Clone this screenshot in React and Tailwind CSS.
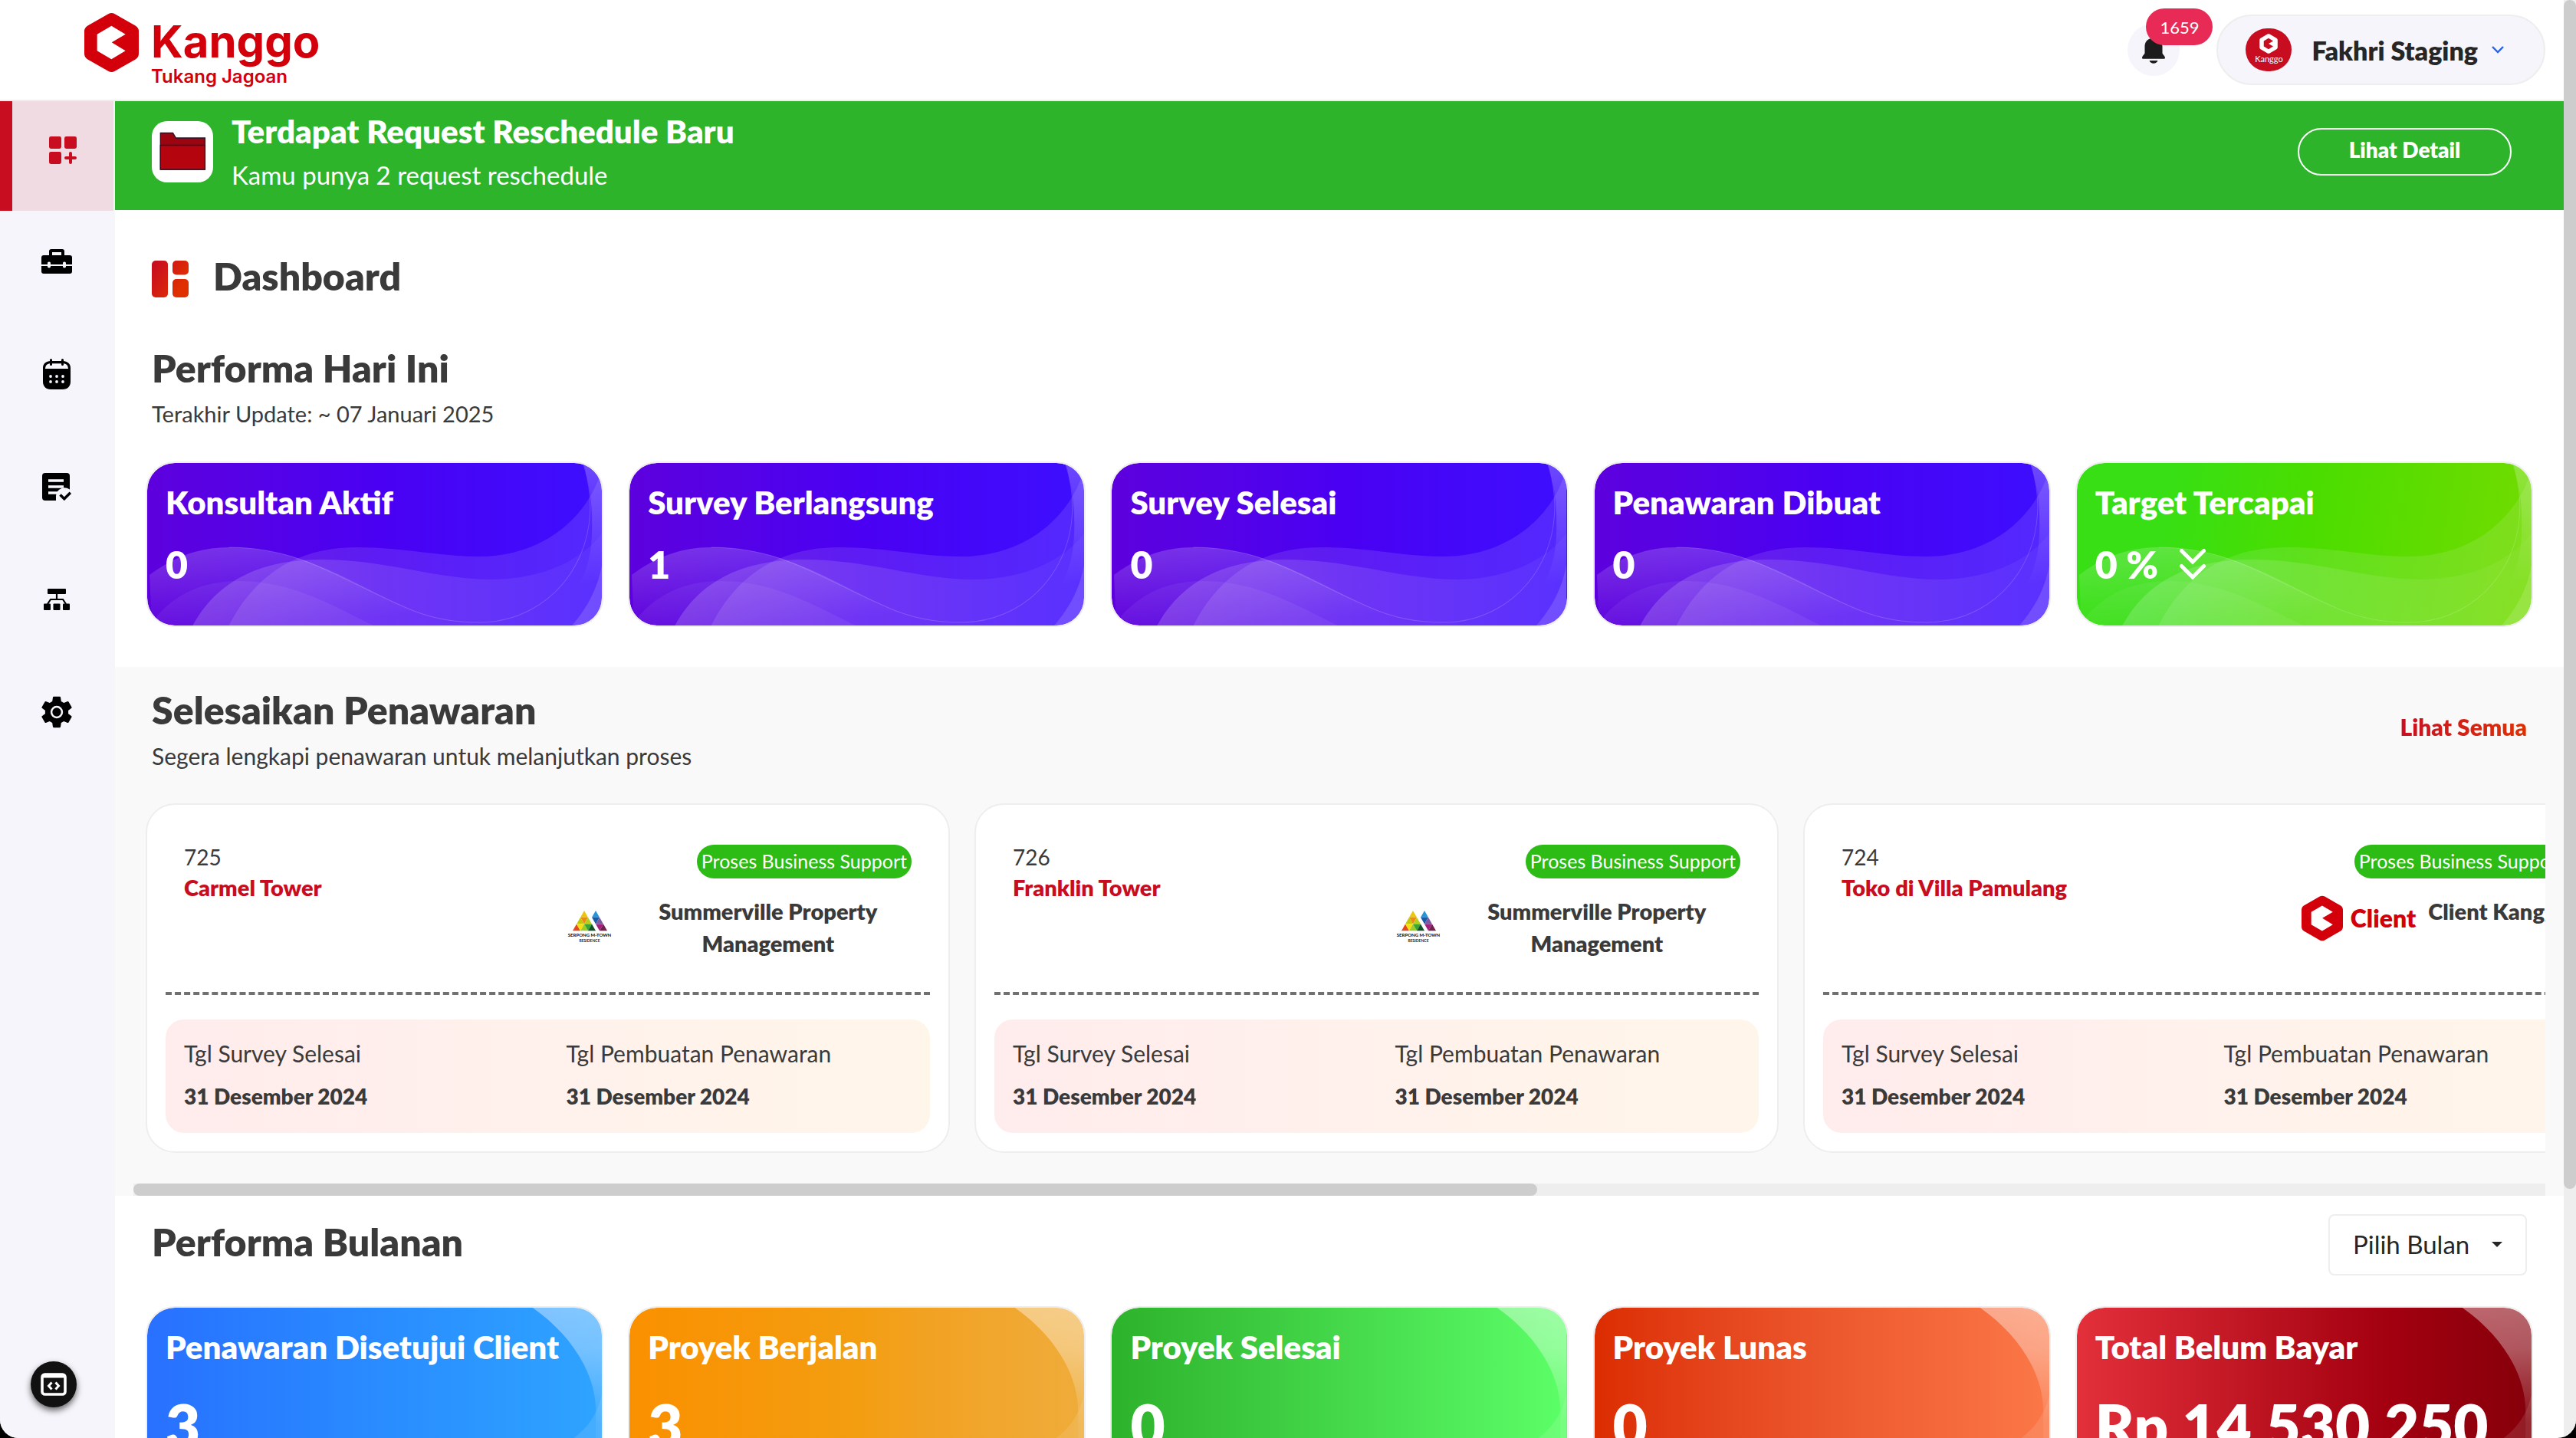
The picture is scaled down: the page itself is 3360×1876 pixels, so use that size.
import React from 'react';

function HexMark({ className, ring = '#d3000b', core = '#ffffff' }) {
  return (
    <svg viewBox="0 0 213 235" className={className} aria-hidden="true">
      <polygon
        points="106.5,28 187,74 187,161 106.5,207 26,161 26,74"
        fill={ring}
        stroke={ring}
        strokeWidth="52"
        strokeLinejoin="round"
      />
      <polygon points="106,52 161,85 107,117 161,150 106,183 50,150 50,85" fill={core} />
    </svg>
  );
}

function GridPlusIcon() {
  return (
    <svg viewBox="0 0 36 36" className="size-9" fill="#c80d20" aria-hidden="true">
      <rect width="16" height="16" rx="2.4" />
      <rect x="20" width="16" height="16" rx="2.4" />
      <rect y="20" width="16" height="16" rx="2.4" />
      <path d="M28 22v12M22 28h12" stroke="#c80d20" strokeWidth="4" strokeLinecap="round" />
    </svg>
  );
}

function ToolboxIcon() {
  return (
    <svg viewBox="0 0 40 32" className="h-8 w-10" aria-hidden="true">
      <path
        fillRule="evenodd"
        d="M13 0h14a3 3 0 0 1 3 3v5h7a3 3 0 0 1 3 3v9H0v-9a3 3 0 0 1 3-3h7V3a3 3 0 0 1 3-3zm1 4v4h12V4z"
      />
      <path d="M0 22h40v7a3 3 0 0 1-3 3H3a3 3 0 0 1-3-3z" />
      <rect x="8" y="16.5" width="4" height="8" rx="1.8" fill="#f5f5fb" />
      <rect x="28" y="16.5" width="4" height="8" rx="1.8" fill="#f5f5fb" />
    </svg>
  );
}

function CalendarIcon() {
  return (
    <svg viewBox="0 0 36 40" className="h-10 w-9" aria-hidden="true">
      <path
        fillRule="evenodd"
        d="M10 3h16c6 0 10 3.500 10 9v18c0 6-4 10-10 10H10C4 40 0 36 0 30V12c0-5.500 4-9 10-9zM3 13h30c-.3-4.700-2.500-6.800-7-6.800H10c-4.500 0-6.700 2.100-7 6.800z"
      />
      <path d="M10.500 1.500v6M25.500 1.500v6" stroke="#000" strokeWidth="3" strokeLinecap="round" />
      <g fill="#f5f5fb">
        <circle cx="10" cy="23" r="1.900" />
        <circle cx="18" cy="23" r="1.900" />
        <circle cx="26" cy="23" r="1.900" />
        <circle cx="10" cy="30" r="1.900" />
        <circle cx="18" cy="30" r="1.900" />
        <circle cx="26" cy="30" r="1.900" />
      </g>
    </svg>
  );
}

function ListCheckIcon() {
  return (
    <svg viewBox="0 0 38 36" className="h-9 w-[38px]" aria-hidden="true">
      <rect width="36" height="36" rx="4" />
      <path d="M8 10h20M8 18h20M8 26h13" stroke="#f5f5fb" strokeWidth="3.400" />
      <path d="M18 38V31a11 11 0 0 1 20-7v14z" fill="#f5f5fb" />
      <path d="M23.500 28.500l5.300 5.300 8-8" fill="none" stroke="#000" strokeWidth="3.400" />
    </svg>
  );
}

function SitemapIcon() {
  return (
    <svg viewBox="0 0 34 28" className="h-7 w-[34px]" aria-hidden="true">
      <rect x="5" width="24" height="7" rx="1" />
      <path d="M17 6v8M5 20l4-6h16l4 6" fill="none" stroke="#000" strokeWidth="2.200" />
      <rect y="19.500" width="9" height="8.500" rx="1" />
      <rect x="12.500" y="19.500" width="9" height="8.500" rx="1" />
      <rect x="25" y="19.500" width="9" height="8.500" rx="1" />
    </svg>
  );
}

function GearIcon() {
  return (
    <svg viewBox="2 2 20 20" className="size-[42px]" aria-hidden="true">
      <path d="M19.140 12.940c.04-.3.060-.610.060-.940 0-.320-.020-.640-.070-.940l2.030-1.580a.49.49 0 0 0 .120-.610l-1.920-3.320a.488.488 0 0 0-.590-.220l-2.390.960c-.5-.380-1.030-.7-1.620-.940l-.360-2.540a.484.484 0 0 0-.480-.410h-3.840c-.240 0-.430.170-.470.410l-.360 2.540c-.590.240-1.130.570-1.620.940l-2.390-.960c-.220-.080-.470 0-.590.220L2.740 8.870c-.120.210-.080.470.120.610l2.030 1.580c-.050.3-.090.630-.090.940s.020.640.070.940l-2.030 1.580a.49.49 0 0 0-.120.610l1.920 3.320c.120.220.370.290.590.220l2.390-.960c.5.380 1.030.7 1.620.940l.360 2.540c.050.240.240.410.480.410h3.840c.240 0 .440-.170.470-.410l.360-2.540c.590-.240 1.130-.560 1.620-.940l2.390.960c.220.080.470 0 .590-.220l1.920-3.320c.120-.220.070-.470-.120-.610z" />
      <circle cx="12" cy="12" r="3.300" fill="none" stroke="#f5f5fb" strokeWidth="1.200" />
    </svg>
  );
}

function BellIcon() {
  return (
    <svg viewBox="0 0 30 36" className="h-9 w-[30px]" fill="#1c1c1c" aria-hidden="true">
      <path d="M15 0a3 3 0 0 1 3 3c5 1 8.500 5 8.500 10.500V22c0 2 3.500 4 3.500 6.300 0 1-.7 1.500-1.700 1.500H1.700c-1 0-1.700-.5-1.700-1.500C0 26 3.500 24 3.500 22v-8.500C3.500 8 7 4 12 3a3 3 0 0 1 3-3z" />
      <path d="M9.500 32h11c-1 2.500-3 3.800-5.500 3.800S10.500 34.500 9.500 32z" />
    </svg>
  );
}

function FolderIcon() {
  return (
    <svg viewBox="0 0 80 80" className="size-20" aria-hidden="true">
      <path d="M11.300 63.200V15.500h16.200l4 6.500h37.900v41.200z" fill="#9c0510" stroke="#1f1630" strokeWidth="1.300" />
      <path d="M11.300 31.500h58.100v31.700H11.300z" fill="#b4050e" stroke="#1f1630" strokeWidth="1.300" />
    </svg>
  );
}

function DashboardIcon() {
  return (
    <svg viewBox="0 0 48 48" className="mb-0.5 size-12" fill="url(#dash-red)" aria-hidden="true">
      <defs>
        <linearGradient id="dash-red" gradientUnits="userSpaceOnUse" x1="0" y1="12" x2="38" y2="36">
          <stop offset="0" stopColor="#c80d20" />
          <stop offset="1" stopColor="#e03000" />
        </linearGradient>
      </defs>
      <rect width="21" height="48" rx="5" />
      <rect x="27" width="21" height="18.500" rx="5" />
      <rect x="27" y="24" width="21" height="24" rx="5" />
    </svg>
  );
}

function MTownLogo() {
  return (
    <svg viewBox="0 0 60 80" className="h-20 w-[60px] shrink-0" role="img" aria-label="Serpong M-Town Residence">
      <path d="M23 20l5 8.700H18z" fill="#ecc60e" />
      <path d="M18 28.700h10l-5 8.700z" fill="#f08a12" />
      <path d="M18 28.700l5 8.700H13z" fill="#c2c80f" />
      <path d="M28 28.700l5 8.700H23z" fill="#b4cf20" />
      <path d="M13 37.400l5 8.800H8z" fill="#e2491c" />
      <path d="M13 37.400h10l-5 8.800z" fill="#f6e012" />
      <path d="M23 37.400l5 8.800H18z" fill="#9ccc28" />
      <path d="M23 37.400h10l-5 8.800z" fill="#3aa535" />
      <path d="M33 37.400l5 8.800H28z" fill="#10512a" />
      <path d="M38 20l5 8.700H33z" fill="#2696d8" />
      <path d="M33 28.700h10l-5 8.700z" fill="#1c5aa8" />
      <path d="M43 28.700l5 8.700H38z" fill="#7a5aa0" />
      <path d="M38 37.400h10l-5 8.800z" fill="#a0207c" />
      <path d="M48 37.400l5 8.800H43z" fill="#74204e" />
      <text x="30" y="54" textAnchor="middle" fontFamily="Lato, sans-serif" fontWeight="900" fontSize="6" fill="#222">
        SERPONG M-TOWN
      </text>
      <text x="30" y="61" textAnchor="middle" fontFamily="Lato, sans-serif" fontWeight="700" fontSize="5" fill="#222">
        RESIDENCE
      </text>
    </svg>
  );
}

function ClientLogo() {
  return (
    <div className="flex h-[60px] shrink-0 items-center gap-2.5 text-[32px] font-extrabold text-[#d3000b]">
      <HexMark className="h-[60px] w-[54px]" />
      Client
    </div>
  );
}

function Waves() {
  return (
    <svg viewBox="0 0 590 212" preserveAspectRatio="none" className="absolute inset-0 size-full" aria-hidden="true">
      <defs>
        <linearGradient id="wave-hump" x1="0" y1="0" x2="0.250" y2="1">
          <stop offset="0" stopColor="#fff" stopOpacity="0.200" />
          <stop offset="1" stopColor="#fff" stopOpacity="0" />
        </linearGradient>
        <linearGradient id="wave-low" x1="0" y1="0" x2="1" y2="0">
          <stop offset="0" stopColor="#fff" stopOpacity="0.170" />
          <stop offset="1" stopColor="#fff" stopOpacity="0.040" />
        </linearGradient>
        <linearGradient id="wave-edge" x1="0" y1="0" x2="0" y2="1">
          <stop offset="0" stopColor="#fff" stopOpacity="0.250" />
          <stop offset="1" stopColor="#fff" stopOpacity="0" />
        </linearGradient>
      </defs>
      <path d="M106 212C140 145 195 110 272 110C335 110 375 122 430 122C515 122 570 70 588 14L590 0V212z" fill="#fff" fillOpacity="0.110" />
      <path d="M59 212C90 155 145 126 226 126C310 126 375 152 446 152C515 152 565 125 590 92V212z" fill="url(#wave-low)" />
      <path d="M3 146C35 122 68 110 106 110C200 110 265 156 334 188C362 201 395 208 430 208L300 212H6z" fill="url(#wave-hump)" />
      <path
        d="M106 110C200 110 250 152 334 188C362 201 395 208 430 208C530 208 600 110 566 2"
        fill="none"
        stroke="#fff"
        strokeOpacity="0.170"
      />
      <path d="M12 200C40 168 75 154 120 154C185 154 240 185 293 212H12z" fill="#fff" fillOpacity="0.060" />
      <path d="M566 0C574 28 578 55 577 90C576 130 565 150 560 160L590 150V0z" fill="url(#wave-edge)" />
      <path d="M551 212C570 190 584 165 590 133V212z" fill="#fff" fillOpacity="0.140" />
    </svg>
  );
}

function Crescent() {
  return (
    <svg viewBox="0 0 590 212" className="absolute inset-x-0 top-0 h-auto w-full overflow-visible" aria-hidden="true">
      <defs>
        <linearGradient id="crescent" gradientUnits="userSpaceOnUse" x1="0" y1="0" x2="0" y2="150">
          <stop offset="0" stopColor="#fff" stopOpacity="0.400" />
          <stop offset="0.350" stopColor="#fff" stopOpacity="0.340" />
          <stop offset="1" stopColor="#fff" stopOpacity="0.060" />
        </linearGradient>
      </defs>
      <path d="M500 0C550 35 582 85 582 134V300H590V0z" fill="url(#crescent)" />
      <path d="M590 112C584 138 572 156 551 171L525 185V300H590z" fill="#fff" fillOpacity="0.110" />
    </svg>
  );
}

const cardBase =
  'relative overflow-hidden rounded-[38px] border-2 border-[#eeeeee] bg-clip-padding px-6 pt-[26px] text-white';
const purple = 'bg-linear-to-r from-[#5d00dd] via-[#4a00f2] to-[#3d0eff]';

const today = [
  { title: 'Konsultan Aktif', value: '0', tone: purple },
  { title: 'Survey Berlangsung', value: '1', tone: purple },
  { title: 'Survey Selesai', value: '0', tone: purple },
  { title: 'Penawaran Dibuat', value: '0', tone: purple },
  {
    title: 'Target Tercapai',
    value: '0 %',
    tone: 'bg-[linear-gradient(100deg,#37df14_20%,#4bdd00_50%,#74db00)]',
    down: true,
  },
];

const monthly = [
  { title: 'Penawaran Disetujui Client', value: '3', tone: 'bg-linear-to-r from-[#2970ff] to-[#2fa4ff]' },
  { title: 'Proyek Berjalan', value: '3', tone: 'bg-linear-to-r from-[#fa9000] via-[#f39d10] to-[#efac3a]' },
  { title: 'Proyek Selesai', value: '0', tone: 'bg-linear-to-r from-[#2db22b] to-[#5cff68]' },
  { title: 'Proyek Lunas', value: '0', tone: 'bg-linear-to-r from-[#dc2c00] to-[#fb7848]' },
  {
    title: 'Total Belum Bayar',
    value: 'Rp 14.530.250',
    tone: 'bg-[linear-gradient(90deg,#e3303a,#a30010_68%,#85000a)]',
  },
];

const offers = [
  { id: '725', name: 'Carmel Tower', client: 'Summerville Property Management', Logo: MTownLogo },
  { id: '726', name: 'Franklin Tower', client: 'Summerville Property Management', Logo: MTownLogo },
  { id: '724', name: 'Toko di Villa Pamulang', client: 'Client Kanggo', Logo: ClientLogo },
];

const nav = [
  { label: 'Proyek', Icon: ToolboxIcon },
  { label: 'Kalender', Icon: CalendarIcon },
  { label: 'Penawaran', Icon: ListCheckIcon },
  { label: 'Struktur', Icon: SitemapIcon },
  { label: 'Pengaturan', Icon: GearIcon },
];

function OfferCard({ id, name, client, Logo }) {
  return (
    <article className="w-[1049px] shrink-0 rounded-[38px] border-2 border-[#eeeeee] bg-white px-6 pb-6">
      <div className="grid grid-cols-2 pt-12">
        <div className="px-6 leading-10">
          <p className="text-[28px]">{id}</p>
          <h3 className="text-[29px] font-extrabold text-[#c80d20]">{name}</h3>
        </div>
        <div className="flex flex-col items-end px-6 pt-1">
          <span className="flex h-11 items-center rounded-full bg-[#2dbb15] px-1.5 text-[25px] whitespace-nowrap text-white">
            Proses Business Support
          </span>
          <div className="mt-[22px] flex min-h-21 items-start justify-end gap-4">
            <Logo />
            <p className="text-center text-[29px] leading-[42px] font-extrabold">{client}</p>
          </div>
        </div>
      </div>
      <div className="mt-[42px] border-t-4 border-dashed border-[#707070]" />
      <dl className="mt-8 grid grid-cols-2 rounded-3xl bg-linear-to-r from-[#ffeced] to-[#fff6ea] pt-6 pb-7 leading-10">
        <div className="px-6">
          <dt className="text-[30px]">Tgl Survey Selesai</dt>
          <dd className="mt-4 text-[28px] font-extrabold">31 Desember 2024</dd>
        </div>
        <div className="px-6">
          <dt className="text-[30px]">Tgl Pembuatan Penawaran</dt>
          <dd className="mt-4 text-[28px] font-extrabold">31 Desember 2024</dd>
        </div>
      </dl>
    </article>
  );
}

function Header() {
  return (
    <header className="flex shrink-0 items-center justify-between border-b-2 border-[#eeeeee] bg-white pr-6 pl-[110px]">
      <a href="#" className="flex h-[130px] items-start gap-4 pt-4 font-[Inter,sans-serif] text-[#d3000b]">
        <HexMark className="h-[79px] w-[71px]" />
        <span className="flex flex-col pt-1.5">
          <span className="text-[58px] leading-[64px] font-bold">Kanggo</span>
          <span className="text-2xl leading-7 font-semibold">Tukang Jagoan</span>
        </span>
      </a>
      <div className="flex items-center gap-12">
        <button type="button" aria-label="Notifikasi" className="relative flex size-[68px] items-center justify-center rounded-full bg-[#f5f5fb]">
          <BellIcon />
          <span className="absolute -top-5 left-6 flex h-12 items-center rounded-full bg-[#e72b56] px-[18px] text-[22px] text-white">
            1659
          </span>
        </button>
        <button type="button" className="flex h-[92px] items-center rounded-full border-2 border-[#eeeeee] bg-[#f5f5fb] pr-[52px] pl-9">
          <span className="flex h-14 w-[60px] flex-col items-center rounded-[28px] bg-[#c80d20] pt-[7px] text-white">
            <HexMark className="h-[26px] w-6" ring="#ffffff" core="#c80d20" />
            <span className="text-[11px] leading-[14px]">Kanggo</span>
          </span>
          <span className="ml-[26px] text-[34px] font-extrabold text-[#262626]">Fakhri Staging</span>
          <svg viewBox="0 0 16 10" className="ml-[18px] h-2.5 w-4" fill="none" stroke="#2563eb" strokeWidth="2.400" aria-hidden="true">
            <path d="M1 1l7 7 7-7" />
          </svg>
        </button>
      </div>
    </header>
  );
}

function Sidebar() {
  return (
    <nav className="w-[150px] shrink-0 border-r-2 border-[#f6f6f9] bg-[#f5f5fb]">
      <a href="#" aria-label="Dashboard" className="flex h-[143px] items-center justify-center border-l-16 border-[#c80d20] bg-[#f0dbe3] pb-[15px]">
        <GridPlusIcon />
      </a>
      {nav.map(({ label, Icon }) => (
        <a key={label} href="#" aria-label={label} className="flex h-[147px] items-center justify-center pb-[15px]">
          <Icon />
        </a>
      ))}
    </nav>
  );
}

export default function App() {
  return (
    <div className="h-screen bg-black font-[Lato,sans-serif] text-[#3a3a3a]">
      <div className="relative flex h-full overflow-hidden rounded-b-3xl bg-white">
        <div className="flex min-w-0 flex-1 flex-col">
          <Header />
          <div className="flex min-h-0 flex-1">
            <Sidebar />
            <main className="min-w-0 flex-1 overflow-hidden">
              <section className="flex h-[142px] items-center gap-6 bg-[#2db42a] pr-[68px] pb-2.5 pl-12 text-white">
                <span className="rounded-[20px] bg-white">
                  <FolderIcon />
                </span>
                <div className="flex-1">
                  <h2 className="text-[42px] leading-[60px] font-extrabold">Terdapat Request Reschedule Baru</h2>
                  <p className="text-[33px] leading-[54px]">Kamu punya 2 request reschedule</p>
                </div>
                <button type="button" className="h-[62px] w-[279px] rounded-full border-2 border-white pb-1.5 text-[28px] font-extrabold">
                  Lihat Detail
                </button>
              </section>

              <section className="pt-14 pb-[52px]">
                <div className="flex items-end gap-8 px-12">
                  <DashboardIcon />
                  <h1 className="text-[50px] leading-[60px] font-extrabold">Dashboard</h1>
                </div>
                <div className="mt-[60px] px-12">
                  <h2 className="text-[50px] leading-[60px] font-extrabold">Performa Hari Ini</h2>
                  <p className="mt-2.5 text-[29px] leading-10">Terakhir Update: ~ 07 Januari 2025</p>
                </div>
                <div className="mt-[42px] grid grid-cols-5 gap-8 px-10">
                  {today.map(({ title, value, tone, down }) => (
                    <article key={title} className={`${cardBase} ${tone} pb-[50px]`}>
                      <Waves />
                      <h3 className="relative text-[42px] leading-[50px] font-extrabold">{title}</h3>
                      <p className="relative mt-[26px] flex items-center gap-7 text-[50px] leading-[60px] font-extrabold">
                        {value}
                        {down && (
                          <svg
                            viewBox="0 0 34 40"
                            className="h-10 w-[34px]"
                            fill="none"
                            stroke="#fff"
                            strokeWidth="5"
                            strokeLinecap="round"
                            aria-hidden="true"
                          >
                            <path d="M2.500 2.500L17 17 31.500 2.500M2.500 22.500L17 37l14.500-14.500" />
                          </svg>
                        )}
                      </p>
                    </article>
                  ))}
                </div>
              </section>

              <section className="bg-[#f9f9f9] pt-[26px]">
                <div className="flex items-center justify-between px-12">
                  <div>
                    <h2 className="text-[50px] leading-[60px] font-extrabold">Selesaikan Penawaran</h2>
                    <p className="mt-2.5 text-[30px] leading-10">Segera lengkapi penawaran untuk melanjutkan proses</p>
                  </div>
                  <a href="#" className="bg-linear-to-r from-[#c80d20] to-[#e03000] bg-clip-text pb-1.5 text-[30px] font-extrabold text-transparent">
                    Lihat Semua
                  </a>
                </div>
                <div className="mx-6">
                  <div className="flex gap-8 overflow-hidden pt-[42px] pb-10 pl-4">
                    {offers.map((offer) => (
                      <OfferCard key={offer.id} {...offer} />
                    ))}
                  </div>
                  <div className="h-4 bg-[#eeeeee]">
                    <div className="h-full w-[58.2%] rounded-full bg-[#cdcdcd]" />
                  </div>
                </div>
              </section>

              <section className="pt-6">
                <div className="flex items-center justify-between px-12">
                  <h2 className="pb-2 text-[50px] leading-[60px] font-extrabold">Performa Bulanan</h2>
                  <div className="relative">
                    <select
                      aria-label="Pilih Bulan"
                      className="h-20 w-[259px] appearance-none rounded-lg border-2 border-[#eeeeee] bg-white pl-[30px] text-[33px] text-[#262626]"
                    >
                      <option>Pilih Bulan</option>
                    </select>
                    <svg viewBox="0 0 14 7" className="pointer-events-none absolute top-9 right-8 h-[7px] w-3.5" fill="#262626" aria-hidden="true">
                      <path d="M0 0h14L7 7z" />
                    </svg>
                  </div>
                </div>
                <div className="mt-10 grid grid-cols-5 gap-8 px-10">
                  {monthly.map(({ title, value, tone }) => (
                    <article key={title} className={`${cardBase} ${tone} pb-12`}>
                      <Crescent />
                      <h3 className="relative text-[42px] leading-[50px] font-extrabold whitespace-nowrap">{title}</h3>
                      <p className="relative mt-8 text-[78px] leading-[90px] font-extrabold whitespace-nowrap">{value}</p>
                    </article>
                  ))}
                </div>
              </section>
            </main>
          </div>
        </div>

        <div className="w-4 shrink-0 bg-[#eeeeee]">
          <div className="h-[82.7%] rounded-full bg-[#cdcdcd]" />
        </div>

        <button
          type="button"
          aria-label="Alat pengembang"
          className="absolute bottom-10 left-10 flex size-[60px] items-center justify-center rounded-full bg-[#111111] shadow-[0_4px_8px_rgba(0,0,0,0.6)]"
        >
          <svg viewBox="0 0 34 30" className="h-[30px] w-[34px]" fill="none" stroke="#fff" aria-hidden="true">
            <rect x="2" y="2" width="30" height="26" rx="3.500" strokeWidth="3.600" />
            <path d="M3 4.500h28" strokeWidth="4" />
            <path d="M14.500 12.500L10.500 17l4 4.500M19.500 12.500l4 4.500-4 4.500" strokeWidth="3" />
          </svg>
        </button>
      </div>
    </div>
  );
}
